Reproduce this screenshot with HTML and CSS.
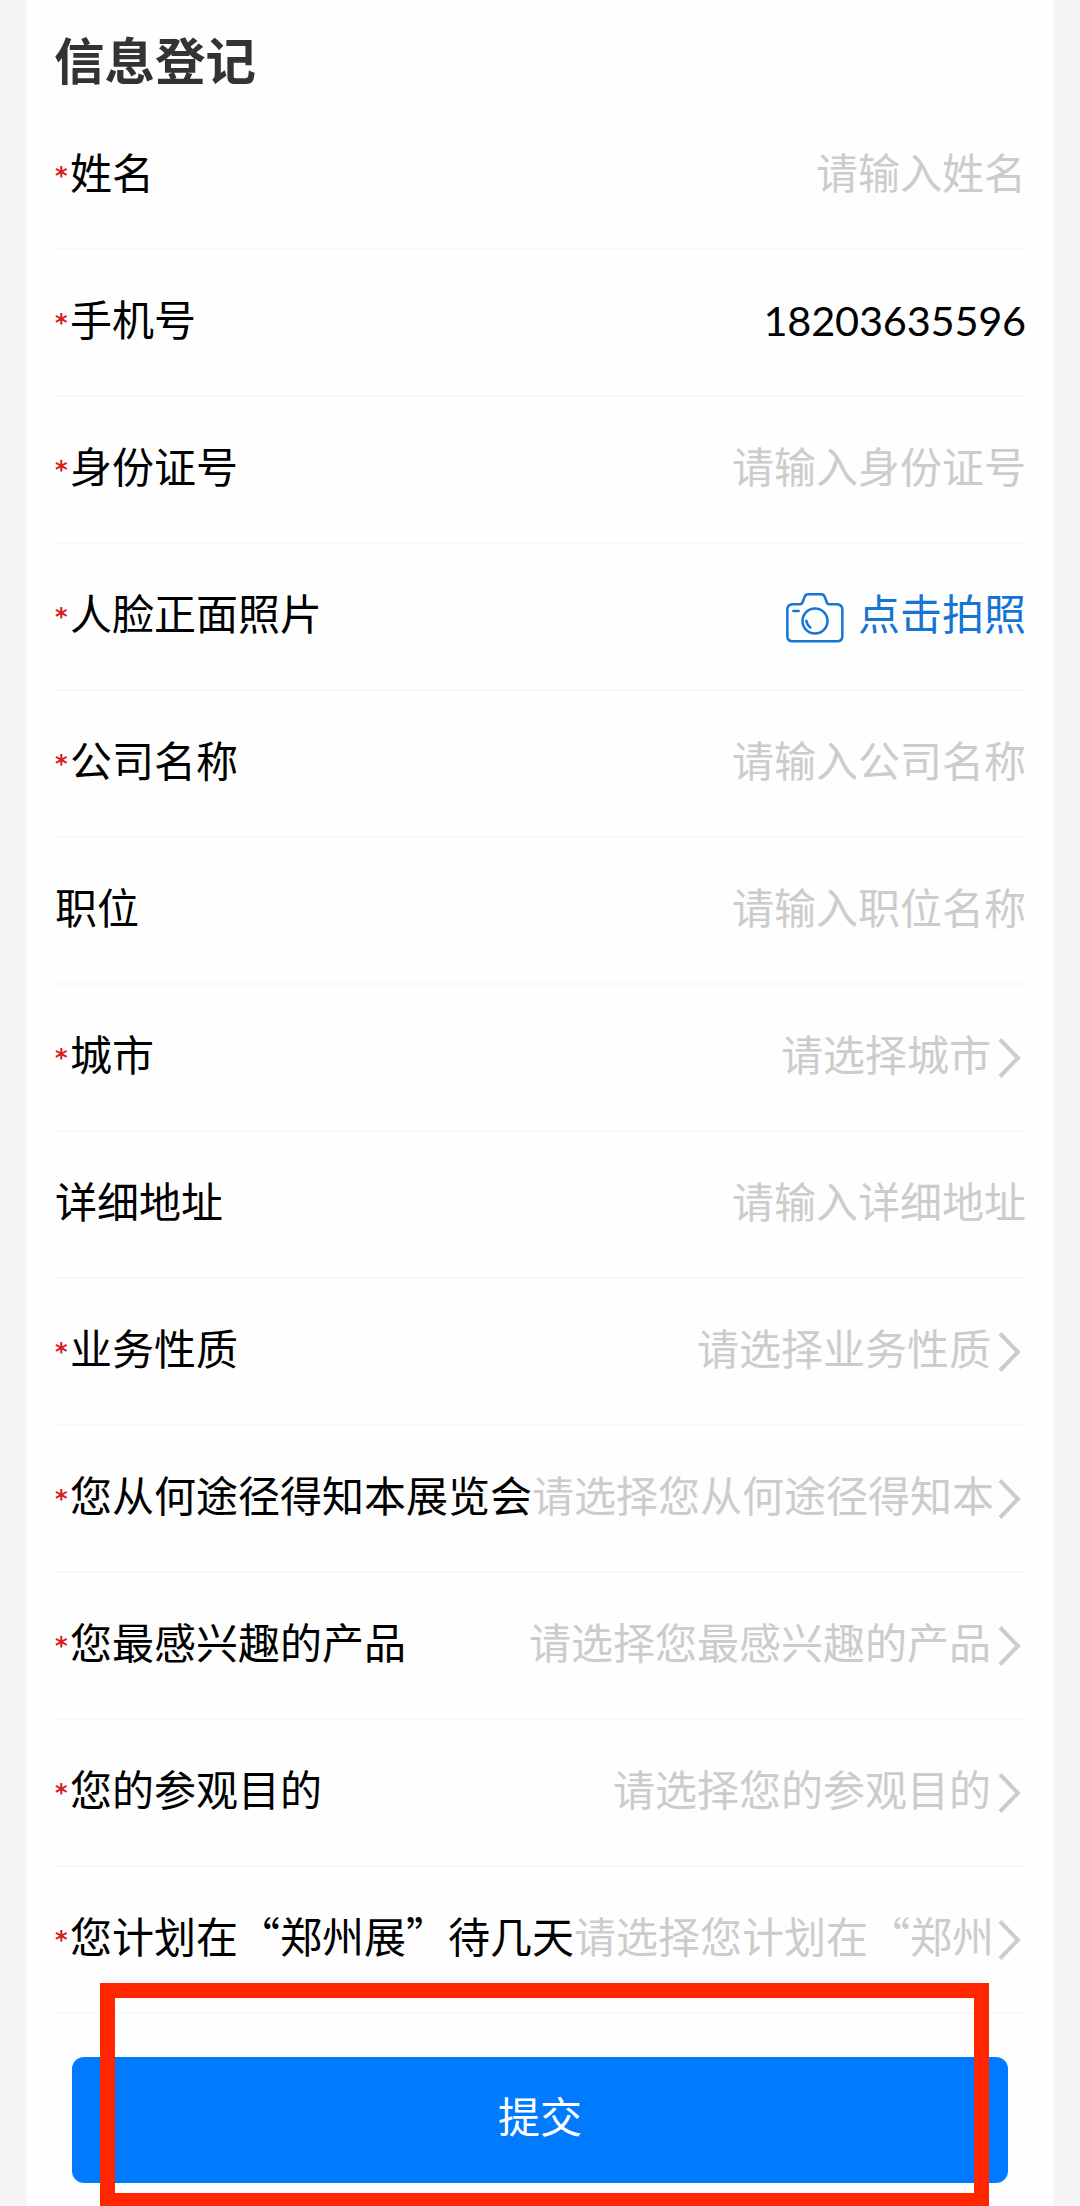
FILE: index.html
```html
<!DOCTYPE html>
<html lang="zh-CN">
<head>
<meta charset="utf-8">
<title>信息登记</title>
<link rel="stylesheet" href="styles.css">
</head>
<body>
<svg class="sprite" aria-hidden="true">
  <symbol id="chevron" viewBox="0 0 35 44"><path d="M9 3.5 27 22 9 40.5" fill="none" stroke="currentColor" stroke-width="4"/></symbol>
</svg>
<main class="card">
  <h1 class="title">信息登记</h1>
  <form class="form">
    <div class="row"><span class="star">*</span><label class="label">姓名</label><span class="value">请输入姓名</span></div>
    <div class="row"><span class="star">*</span><label class="label">手机号</label><span class="value phone">18203635596</span></div>
    <div class="row"><span class="star">*</span><label class="label">身份证号</label><span class="value">请输入身份证号</span></div>
    <div class="row"><span class="star">*</span><label class="label">人脸正面照片</label>
      <span class="value photo">
        <svg class="camera" viewBox="0 0 174 150" fill="none" stroke="currentColor" stroke-width="7.5" stroke-linecap="round" stroke-linejoin="round">
          <path d="M18 34H42Q48 33 50 27L56 11Q59 4 66 4H106Q113 4 116 11L122 27Q124 34 130 34H154Q169 36 169 50V129Q169 145 153 145H20Q4 145 4 129V50Q4 36 18 34Z"/>
          <circle cx="87" cy="84" r="37.5"/>
          <path d="M22 54H38M61 83Q63 97 73 103"/>
        </svg>
        <span>点击拍照</span>
      </span>
    </div>
    <div class="row"><span class="star">*</span><label class="label">公司名称</label><span class="value">请输入公司名称</span></div>
    <div class="row"><label class="label">职位</label><span class="value">请输入职位名称</span></div>
    <div class="row"><span class="star">*</span><label class="label">城市</label><span class="value">请选择城市</span><svg class="chevron"><use href="#chevron"/></svg></div>
    <div class="row"><label class="label">详细地址</label><span class="value">请输入详细地址</span></div>
    <div class="row"><span class="star">*</span><label class="label">业务性质</label><span class="value">请选择业务性质</span><svg class="chevron"><use href="#chevron"/></svg></div>
    <div class="row"><span class="star">*</span><label class="label">您从何途径得知本展览会</label><span class="value">请选择您从何途径得知本</span><svg class="chevron"><use href="#chevron"/></svg></div>
    <div class="row"><span class="star">*</span><label class="label">您最感兴趣的产品</label><span class="value">请选择您最感兴趣的产品</span><svg class="chevron"><use href="#chevron"/></svg></div>
    <div class="row"><span class="star">*</span><label class="label">您的参观目的</label><span class="value">请选择您的参观目的</span><svg class="chevron"><use href="#chevron"/></svg></div>
    <div class="row"><span class="star">*</span><label class="label">您计划在“郑州展”待几天</label><span class="value">请选择您计划在“郑州</span><svg class="chevron"><use href="#chevron"/></svg></div>
    <button class="submit" type="button">提交</button>
  </form>
</main>
<div class="highlight"></div>
</body>
</html>
```
FILE: styles.css
```css
* {
  box-sizing: border-box;
}

body {
  position: relative;
  height: 2206px;
  margin: 0;
  padding: 0 27px;
  overflow: hidden;
  background: #f5f5f5;
  color: #000;
  font-family: "Noto Sans CJK SC", sans-serif;
  font-size: 42px;
  line-height: 60px;
}

.sprite {
  display: none;
}

.card {
  height: 2206px;
  padding: 0 27px 0 28px;
  background: #fefefe;
}

.title {
  height: 103px;
  margin: 0 0 0 -1px;
  padding-top: 22px;
  color: #333;
  font-size: 50.5px;
  font-weight: 700;
  line-height: 72px;
}

.row {
  display: flex;
  align-items: center;
  height: 147px;
  padding-bottom: 10px;
  border-bottom: 2px solid #f8f8f8;
  white-space: nowrap;
}

.star {
  flex: none;
  width: 15px;
  padding-top: 11px;
  color: #d81e1e;
  font-family: "DejaVu Sans", sans-serif;
  font-size: 24px;
  font-weight: 700;
}

.label {
  flex: none;
}

.value {
  flex: 1;
  min-width: 0;
  color: #ccc;
  text-align: right;
}

.phone {
  padding-top: 5px;
  color: #000;
  font-family: Lato, sans-serif;
  font-size: 41.5px;
  letter-spacing: -0.2px;
}

.photo {
  display: flex;
  align-items: center;
  justify-content: flex-end;
  gap: 14px;
  color: #1475d4;
}

.camera {
  width: 58px;
  height: 50px;
  margin-top: 12px;
}

.chevron {
  flex: none;
  width: 35px;
  height: 44px;
  margin-top: 11px;
  color: #ccc;
}

.submit {
  display: block;
  width: 936px;
  height: 126px;
  margin: 43px 0 0 17px;
  padding: 0 0 10px;
  border: 0;
  border-radius: 12px;
  background: #007aff;
  color: #fff;
  font: inherit;
}

.highlight {
  position: absolute;
  top: 1983px;
  left: 100px;
  width: 889px;
  height: 225px;
  border: 15px solid #ff2600;
}
```
